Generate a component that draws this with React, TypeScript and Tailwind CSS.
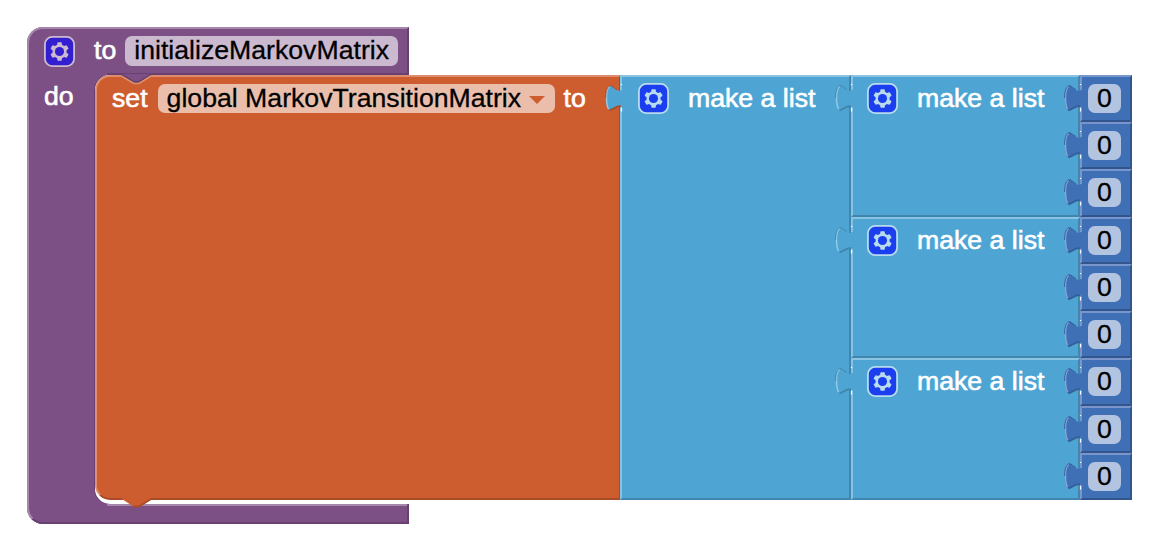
import type { ReactNode } from "react";

const TAB =
  "M18 6H17C13 9 10 3.500 6.500 2C3.500 .8 1 5.500 1 13.500C1 20 2 25 4.500 26.500C8 27 12 20.500 16.500 22.500L18 23.500Z";

const GEAR =
  "m4.203,7.296 0,1.368 -0.92,0.677 -0.11,0.41 0.9,1.559 0.41,0.11 1.043,-0.457 1.187,0.683 0.127,1.134 0.3,0.3 1.8,0 0.3,-0.299 0.127,-1.138 1.185,-0.682 1.046,0.458 0.409,-0.11 0.9,-1.559 -0.11,-0.41 -0.92,-0.677 0,-1.366 0.92,-0.677 0.11,-0.41 -0.9,-1.559 -0.409,-0.109 -1.046,0.458 -1.185,-0.682 -0.127,-1.138 -0.3,-0.299 -1.8,0 -0.3,0.3 -0.126,1.135 -1.187,0.682 -1.043,-0.457 -0.41,0.11 -0.899,1.559 0.108,0.409z";

function Gear({ fill, line }: { fill: string; line: string }) {
  return (
    <svg className="h-[31px] w-[31px] shrink-0" viewBox="-.5 -.5 17 17">
      <rect x="0" y="0" width="16" height="16" rx="4" fill={fill} stroke={line} />
      <path d={GEAR} fill={line} />
      <circle cx="8" cy="8" r="2.5" fill={fill} />
    </svg>
  );
}

function Tab({ fill, light, dark }: { fill: string; light: string; dark: string }) {
  return (
    <svg className="absolute -left-4 top-[9px] h-[30px] w-[18px]" viewBox="0 0 18 30">
      <path d={TAB} fill={fill} />
      <path d="M4.500 2.500C2.200 4 1.500 9 1.500 13.500C1.500 18 2.200 22.500 3.500 25" fill="none" stroke={light} strokeWidth="1.5" />
      <path d="M.6 14C.4 9 1.500 3.500 4.500 1.700C7 1 9 4.500 12 5.500" fill="none" stroke={dark} strokeWidth=".9" />
      <path d="M4.500 26.300C8 26 12 21 16 22.300" fill="none" stroke={dark} strokeWidth="1.8" />
      <path d="M16.500 24V27.500M16.500 0V1" stroke="#fff" strokeWidth="1.2" />
    </svg>
  );
}

function Label({ children }: { children: ReactNode }) {
  return (
    <span className="block whitespace-pre leading-[30px] text-white [-webkit-text-stroke:0.6px_#fff]">{children}</span>
  );
}

function Zero() {
  return (
    <div className="relative min-h-0 flex-1 border-2 border-b-[#33558e] border-l-[#7896cb] border-r-[#33558e] border-t-[#7896cb] bg-[#3f6fb5] pl-[6px] pt-[7px]">
      <div className="flex h-[29px] w-[33px] items-center justify-center rounded-[7px] bg-[#b3c4e1] leading-[29px] text-black [-webkit-text-stroke:0.3px_#000]">
        0
      </div>
      <div className="absolute -left-0.5 -top-0.5 h-full">
        <Tab fill="#3f6fb5" light="#85a5d4" dark="#345f98" />
      </div>
    </div>
  );
}

function InnerList() {
  return (
    <div className="flex min-h-0 flex-1">
      <div className="relative flex w-[229px] items-start border-2 border-b-[#4186ad] border-l-[#87c2e2] border-r-[#4186ad] border-t-[#8ac4e2] bg-[#4ea5d4] pl-3.5 pt-1.5">
        <Gear fill="#1b3fee" line="#b8dbee" />
        <div className="ml-[19px]">
          <Label>make a list</Label>
        </div>
        <div className="absolute -left-0.5 -top-0.5">
          <Tab fill="#4ea5d4" light="#91cae6" dark="#3f84aa" />
        </div>
      </div>
      <div className="flex w-[52px] flex-col">
        <Zero />
        <Zero />
        <Zero />
      </div>
    </div>
  );
}

function SetBlock() {
  return (
    <div className="relative flex h-[425px] w-[525px] items-start rounded-l-[15px] border-b-2 border-l-2 border-r border-t-2 border-b-[#a84b27] border-l-[#de9070] border-r-[#a84b27] border-t-[#dd8d6d] bg-[#cd5c2e] pl-[15px] pt-1.5">
      <svg className="absolute -top-[3px] left-[23px] h-[11px] w-[34px]" viewBox="0 0 34 11">
        <path d="M2 0V1L14 8.500H19L31 1V0Z" fill="#7c5085" />
        <path d="M2 1L14 8H19L31 .5" fill="none" stroke="#633e69" strokeWidth="1.500" />
        <path d="M2 2.500L14 9.500H19L31 2" fill="none" stroke="#de9070" strokeWidth="1.500" />
      </svg>
      <Label>set</Label>
      <div className="ml-[10px] mt-px flex h-[29px] w-[397px] items-center rounded-[7px] bg-[#ebbeab] pl-[9px] leading-[29px] text-black [-webkit-text-stroke:0.3px_#000]">
        global MarkovTransitionMatrix
        <svg className="ml-2 mt-0.5 h-2 w-4" viewBox="0 0 16 8">
          <path d="M0 0H16L8 8Z" fill="#cd5c2e" />
        </svg>
      </div>
      <div className="ml-[9px]">
        <Label>to</Label>
      </div>
      <svg className="absolute -bottom-[10px] left-[23px] h-[11px] w-[34px]" viewBox="0 0 34 11">
        <path d="M2 0V2L14 10H19L31 2V0Z" fill="#cd5c2e" />
        <path d="M13 9.500H19L31 2" fill="none" stroke="#a84b27" strokeWidth="2" />
      </svg>
    </div>
  );
}

export default function App() {
  return (
    <main className="h-[560px] w-[1156px] overflow-hidden bg-white pl-[27px] pt-[27px] font-['Liberation_Sans',Arial,sans-serif] text-[26.67px]">
      <section className="flex h-[497px] w-[382px] flex-col rounded-l-[16px] bg-[#7c5085] shadow-[inset_2px_0_0_#a587ab]">
        <header className="relative flex h-12 items-start rounded-tl-[16px] border-l-2 border-r-2 border-t-2 border-l-[#a587ab] border-r-[#684170] border-t-[#a587ab] pl-[15px] pt-1.5">
          <div className="mt-px">
            <Gear fill="#331fd0" line="#cbb9cf" />
          </div>
          <div className="ml-[19px]">
            <Label>to</Label>
          </div>
          <div className="ml-[9px] mt-[1px] flex h-[30px] w-[273px] items-center rounded-[7px] bg-[#cbb9cf] pl-[9px] leading-[28px] text-black [-webkit-text-stroke:0.3px_#000]">
            <span className="-mt-0.5">initializeMarkovMatrix</span>
          </div>
          <div className="absolute -right-0.5 bottom-0 h-0.5 w-[302px] bg-[#684170]" />
        </header>
        <div className="flex h-[429px] items-start">
          <div className="w-[68px] shrink-0 pl-[17px] pt-[6px]">
            <Label>do</Label>
          </div>
          <div className="h-[429px] w-[314px] shrink-0 rounded-l-[15px] bg-white shadow-[-1px_0_0_#684170]">
            <div className="flex h-[425px] w-max">
              <SetBlock />
              <div className="relative flex w-[231px] items-start border-2 border-b-[#4186ad] border-l-[#87c2e2] border-r-[#4186ad] border-t-[#8ac4e2] bg-[#4ea5d4] pl-4 pt-1.5">
                <Gear fill="#1b3fee" line="#b8dbee" />
                <div className="ml-[19px]">
                  <Label>make a list</Label>
                </div>
                <div className="absolute -left-[1px] -top-0.5">
                  <Tab fill="#4ea5d4" light="#9bc5d5" dark="#a84b27" />
                </div>
              </div>
              <div className="flex h-[425px] flex-col">
                <InnerList />
                <InnerList />
                <InnerList />
              </div>
            </div>
          </div>
        </div>
        <footer className="h-5 rounded-bl-[16px] border-2 border-b-[#684170] border-l-[#a587ab] border-r-[#684170] border-t-transparent">
          <div className="-mt-0.5 ml-[78px] h-0.5 w-[300px] bg-[#a587ab]" />
        </footer>
      </section>
    </main>
  );
}
